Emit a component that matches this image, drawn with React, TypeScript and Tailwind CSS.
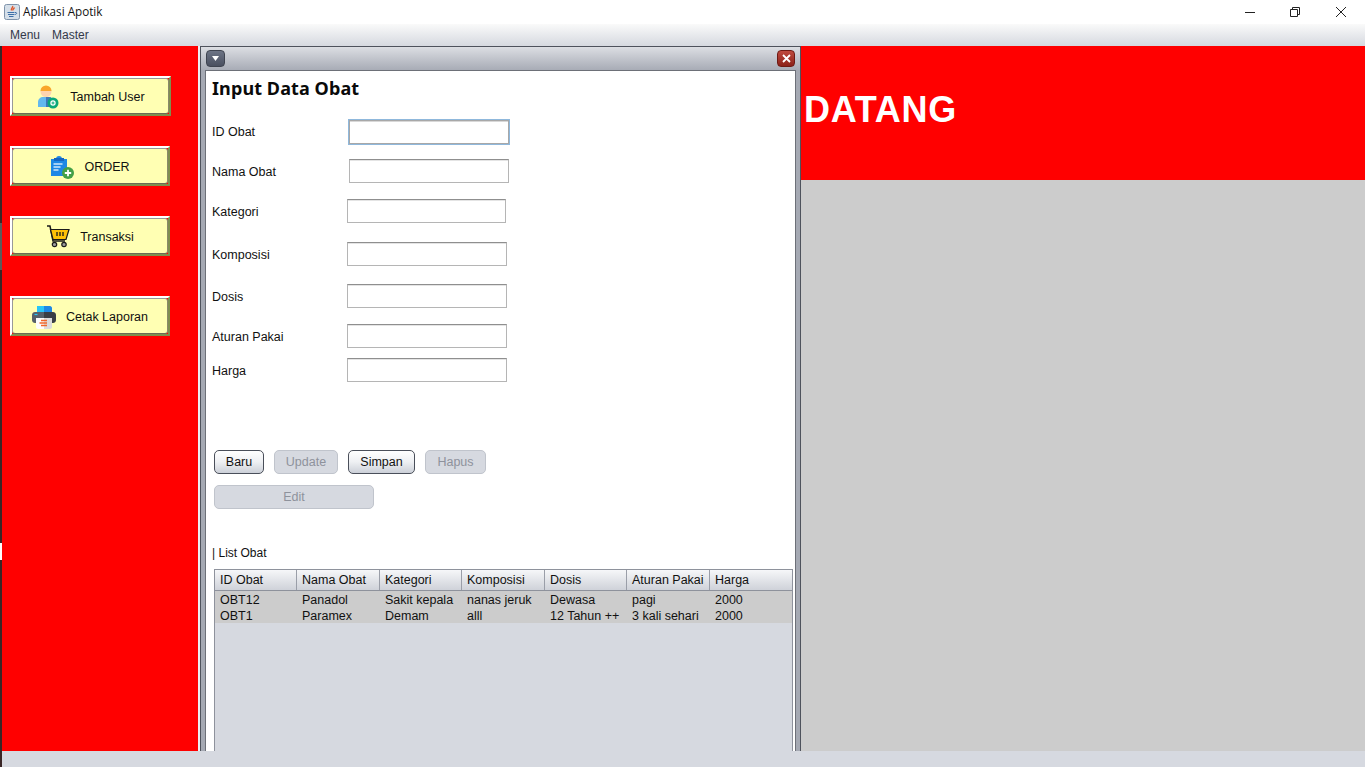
const plainInput = "border-[#b5b5b5] border-t-[#8f8f8f] shadow-[inset_0_1px_0_#e4e4e4]";

const fields = [
  { label: "ID Obat", rowClass: "mt-[15px]", labelClass: "w-[137px]", inputClass: "w-[160px] border-[#a8a8a8] shadow-[0_0_0_1px_#8fb8dc,inset_0_1px_0_#d8d8d8]" },
  { label: "Nama Obat", rowClass: "mt-[15px]", labelClass: "w-[137px] pt-[2px]", inputClass: `w-[160px] ${plainInput}` },
  { label: "Kategori", rowClass: "mt-[16px]", labelClass: "w-[135px] pt-[2px]", inputClass: `w-[159px] ${plainInput}` },
  { label: "Komposisi", rowClass: "mt-[19px]", labelClass: "w-[135px] pt-[2px]", inputClass: `w-[160px] ${plainInput}` },
  { label: "Dosis", rowClass: "mt-[18px]", labelClass: "w-[135px] pt-[2px]", inputClass: `w-[160px] ${plainInput}` },
  { label: "Aturan Pakai", rowClass: "mt-[16px]", labelClass: "w-[135px] pt-[2px]", inputClass: `w-[160px] ${plainInput}` },
  { label: "Harga", rowClass: "mt-[10px]", labelClass: "w-[135px] pt-[2px]", inputClass: `w-[160px] ${plainInput}` },
];

const columns = ["ID Obat", "Nama Obat", "Kategori", "Komposisi", "Dosis", "Aturan Pakai", "Harga"];

const rows = [
  ["OBT12", "Panadol", "Sakit kepala", "nanas jeruk", "Dewasa", "pagi", "2000"],
  ["OBT1", "Paramex", "Demam", "alll", "12 Tahun ++", "3 kali sehari", "2000"],
];

const gridCols = "grid grid-cols-[82px_83px_82px_83px_82px_83px_82px]";

function JavaIcon() {
  return (
    <svg width="16" height="16" viewBox="0 0 16 16">
      <rect x="0.5" y="0.5" width="15" height="15" rx="2" fill="#d5dfe9" stroke="#7f93aa" />
      <path d="M8.500 2c1 1.500-2 2.500-1 4.500M10.500 3.500c-.5 1-2 1.500-1.500 3" stroke="#e0562a" strokeWidth="1.400" fill="none" />
      <path d="M3.500 8.500h7M4 10.500h6.500M5 12.500h4.500" stroke="#3b6ea8" strokeWidth="1" />
      <path d="M11 8.500c2-.5 2.500 1.500 0 2" stroke="#3b6ea8" strokeWidth="1" fill="none" />
    </svg>
  );
}

function UserIcon() {
  return (
    <svg width="24" height="24" viewBox="0 0 24 24">
      <path d="M2 22v-5c0-3 2.500-5 5-5h6c2.500 0 4 2 4 5v5z" fill="#63b8ee" />
      <path d="M10 12h3c2.500 0 4 2 4 5v5h-7z" fill="#3d78b8" />
      <circle cx="10" cy="6.500" r="5.500" fill="#fcd3b0" />
      <path d="M4.500 6a5.500 5.500 0 0 1 11 0z" fill="#f9a62b" />
      <circle cx="17" cy="18" r="5.500" fill="#0aa878" />
      <circle cx="17" cy="18" r="2.700" fill="#ffffff" />
      <path d="M17 16.500v3M15.500 18h3" stroke="#0aa878" strokeWidth="1" />
    </svg>
  );
}

function OrderIcon() {
  return (
    <svg width="24" height="24" viewBox="0 0 24 24">
      <path d="M1 4h5a3 3 0 0 1 6 0h5v17H1z" fill="#1e88e5" />
      <path d="M4 3h10v3H4z" fill="#1565c0" />
      <path d="M3.500 9h9M3.500 12h7M3.500 15h5" stroke="#cfe6fa" strokeWidth="1.300" />
      <circle cx="18" cy="18" r="6" fill="#43a047" />
      <path d="M18 14.800v6.400M14.800 18h6.400" stroke="#ffffff" strokeWidth="1.800" />
    </svg>
  );
}

function CartIcon() {
  return (
    <svg width="24" height="24" viewBox="0 0 24 24">
      <path d="M1 1h3l3 15h12" stroke="#1a1a1a" strokeWidth="1.500" fill="none" />
      <path d="M4.500 4.500H23l-3 10H7z" fill="#ffc107" stroke="#1a1a1a" strokeWidth="1.200" />
      <path d="M11 7v4M14 7v4M17 7v4" stroke="#1a1a1a" strokeWidth="1.300" />
      <circle cx="8.500" cy="19.500" r="2.200" fill="#9e9e9e" stroke="#1a1a1a" strokeWidth="1.200" />
      <circle cx="18" cy="19.500" r="2.200" fill="#9e9e9e" stroke="#1a1a1a" strokeWidth="1.200" />
    </svg>
  );
}

function PrinterIcon() {
  return (
    <svg width="24" height="24" viewBox="0 0 24 24">
      <path d="M5 1h7v7H5z" fill="#29c5f6" />
      <path d="M12 1h6c1 0 2 1 2 2v5h-8z" fill="#1e88e5" />
      <path d="M3 7h9v11H3c-1.500 0-3-1-3-3v-5c0-2 1.500-3 3-3z" fill="#56606a" />
      <path d="M12 7h9c1.500 0 3 1 3 3v5c0 2-1.500 3-3 3h-9z" fill="#3a3e44" />
      <path d="M2.500 9.500h3" stroke="#29c5f6" strokeWidth="1.200" />
      <path d="M4 13h8v11H6c-1 0-2-1-2-2z" fill="#fdfdfd" />
      <path d="M12 13h8v9c0 1-1 2-2 2h-6z" fill="#dcdcdc" />
      <path d="M9 15.500h6M7.500 18h7.500M9 20.500h6" stroke="#f0672b" strokeWidth="1.300" />
    </svg>
  );
}

const sideButtons = [
  { label: "Tambah User", icon: <UserIcon />, wrapClass: "mt-[30px] w-[161px]" },
  { label: "ORDER", icon: <OrderIcon />, wrapClass: "mt-[30px] w-[160px]" },
  { label: "Transaksi", icon: <CartIcon />, wrapClass: "mt-[30px] w-[160px]" },
  { label: "Cetak Laporan", icon: <PrinterIcon />, wrapClass: "mt-[40px] w-[160px]" },
];

function SideButton({ label, icon, wrapClass }: { label: string; icon: React.ReactNode; wrapClass: string }) {
  return (
    <div className={`${wrapClass} h-[40px] border-2 border-t-white border-l-white border-r-[#7f8f4f] border-b-[#7f8f4f]`}>
      <div className="flex h-full items-center justify-center gap-[10px] rounded-[3px] border border-t-[#999999] border-l-[#999999] border-r-[#8a8a6a] border-b-[#6b6b55] bg-[#ffffb3] pt-[2px] text-[12.500px] text-[#111111]">
        {icon}
        <span>{label}</span>
      </div>
    </div>
  );
}

function ActionButton({ label, enabled, className }: { label: string; enabled: boolean; className: string }) {
  return (
    <button
      className={
        enabled
          ? `h-[24px] rounded-[5px] border border-[#4a4f5a] bg-gradient-to-b from-[#ffffff] via-[#eef0f3] to-[#ccd0d8] text-[12.500px] text-[#111111] ${className}`
          : `h-[24px] rounded-[5px] border border-[#c0c4cc] bg-[#d6d9e0] text-[12.500px] text-[#8e929c] ${className}`
      }
    >
      {label}
    </button>
  );
}

export default function App() {
  return (
    <div className="flex h-[767px] w-[1365px] flex-col overflow-hidden bg-[#d6d9e0] font-['Liberation_Sans',Arial,sans-serif]">
      {/* window title */}
      <div className="flex h-[24px] shrink-0 items-center bg-white pl-[4px]">
        <JavaIcon />
        <span className="ml-[3px] font-['Open_Sans',sans-serif] text-[11.700px] text-[#111111]">Aplikasi Apotik</span>
        <div className="ml-auto flex items-center">
          <svg width="10" height="10" viewBox="0 0 10 10" className="mr-[35px]">
            <path d="M0 5.500h10" stroke="#222222" />
          </svg>
          <svg width="10" height="10" viewBox="0 0 10 10" className="mr-[36px]">
            <path d="M2.500 2.500V.5h7v7h-2M.5 2.500h7v7h-7z" stroke="#222222" fill="none" />
          </svg>
          <svg width="10" height="10" viewBox="0 0 10 10" className="mr-[19px]">
            <path d="M0 0l10 10M10 0L0 10" stroke="#222222" />
          </svg>
        </div>
      </div>

      {/* menu */}
      <div className="flex h-[22px] shrink-0 items-center gap-[12px] bg-gradient-to-b from-[#fafafa] to-[#d6d9e0] pl-[10px] text-[12px] text-[#33394a]">
        <span>Menu</span>
        <span>Master</span>
      </div>

      <div className="flex min-h-0 flex-1">
        <div className="flex w-[2px] shrink-0 flex-col bg-[#3a2626]">
          <div className="mt-[177px] h-[47px] bg-[#5a5a5a]" />
          <div className="mt-[273px] h-[17px] bg-white" />
        </div>

        <div className="flex min-w-0 flex-1 flex-col">
          <div className="flex h-[705px] shrink-0">
            {/* sidebar */}
            <div className="flex w-[196px] shrink-0 flex-col bg-[#ff0000] pl-[8px]">
              {sideButtons.map((b) => (
                <SideButton key={b.label} {...b} />
              ))}
            </div>
            <div className="w-[2px] shrink-0 bg-[#eceef2]" />

            {/* internal frame */}
            <div className="flex w-[601px] shrink-0 flex-col overflow-hidden border-x border-t border-[#4e525c] bg-[#a5a9b3]">
              <div className="flex h-[23px] shrink-0 items-center justify-between bg-gradient-to-b from-[#dcdee3] to-[#a8acb6] pl-[5px] pr-[5px]">
                <div className="flex h-[17px] w-[19px] items-center justify-center rounded-[4px] border border-[#3f4450] bg-gradient-to-b from-[#6d7485] to-[#4a5060]">
                  <svg width="7" height="5" viewBox="0 0 7 5">
                    <path d="M0 0h7L3.500 5z" fill="#ffffff" />
                  </svg>
                </div>
                <div className="flex h-[17px] w-[18px] items-center justify-center rounded-[4px] border border-[#6e1a14] bg-gradient-to-b from-[#c04a3e] to-[#8c2018]">
                  <svg width="9" height="9" viewBox="0 0 9 9">
                    <path d="M1 1l7 7M8 1L1 8" stroke="#ffffff" strokeWidth="1.800" />
                  </svg>
                </div>
              </div>

              <div className="ml-[4px] mr-[4px] flex min-h-0 flex-1 flex-col border-x border-t border-[#6d7078] bg-white pl-[6px]">
                <h1 className="flex h-[34px] shrink-0 items-center font-['Noto_Sans',sans-serif] text-[18px] font-bold tracking-[0.1px] text-[#0a0a0a]">
                  Input Data Obat
                </h1>

                {fields.map((f) => (
                  <div key={f.label} className={`flex h-[24px] shrink-0 items-center text-[12.500px] text-[#111111] ${f.rowClass}`}>
                    <span className={f.labelClass}>{f.label}</span>
                    <input readOnly className={`h-[24px] border bg-white outline-none ${f.inputClass}`} />
                  </div>
                ))}

                <div className="ml-[2px] mt-[68px] flex shrink-0 gap-[10px]">
                  <ActionButton label="Baru" enabled className="w-[50px]" />
                  <ActionButton label="Update" enabled={false} className="w-[64px]" />
                  <ActionButton label="Simpan" enabled className="w-[67px]" />
                  <ActionButton label="Hapus" enabled={false} className="w-[61px]" />
                </div>
                <div className="ml-[2px] mt-[10px] shrink-0">
                  <ActionButton label="Edit" enabled={false} className="w-[160px]" />
                </div>

                <div className="mt-[36px] shrink-0 text-[12px] leading-[16px] text-[#111111]">| List Obat</div>

                {/* table */}
                <div className="ml-[2px] mt-[8px] flex min-h-0 w-[579px] flex-1 flex-col border-x border-t border-[#8e929c] bg-[#d6d9e0] text-[12.500px] text-[#111111]">
                  <div className={`${gridCols} h-[21px] shrink-0 border-b border-[#8e929c] bg-gradient-to-b from-[#f6f7f9] to-[#cfd2d9]`}>
                    {columns.map((c) => (
                      <div key={c} className="flex items-center border-r border-[#9a9ea8] pl-[5px] last:border-r-0">
                        {c}
                      </div>
                    ))}
                  </div>
                  {rows.map((r) => (
                    <div key={r[0]} className={`${gridCols} h-[16px] shrink-0 bg-[#cccccc]`}>
                      {r.map((v, i) => (
                        <div key={i} className="whitespace-nowrap pl-[5px] pt-[1px] leading-[16px]">
                          {v}
                        </div>
                      ))}
                    </div>
                  ))}
                </div>
              </div>
            </div>

            {/* desktop pane */}
            <div className="flex min-w-0 flex-1 flex-col bg-[#cccccc]">
              <div className="flex h-[134px] items-center bg-[#ff0000] pb-[6px] pl-[3px]">
                <span className="text-[36px] font-bold tracking-[0.7px] text-white">DATANG</span>
              </div>
            </div>
          </div>
        </div>
      </div>
    </div>
  );
}
